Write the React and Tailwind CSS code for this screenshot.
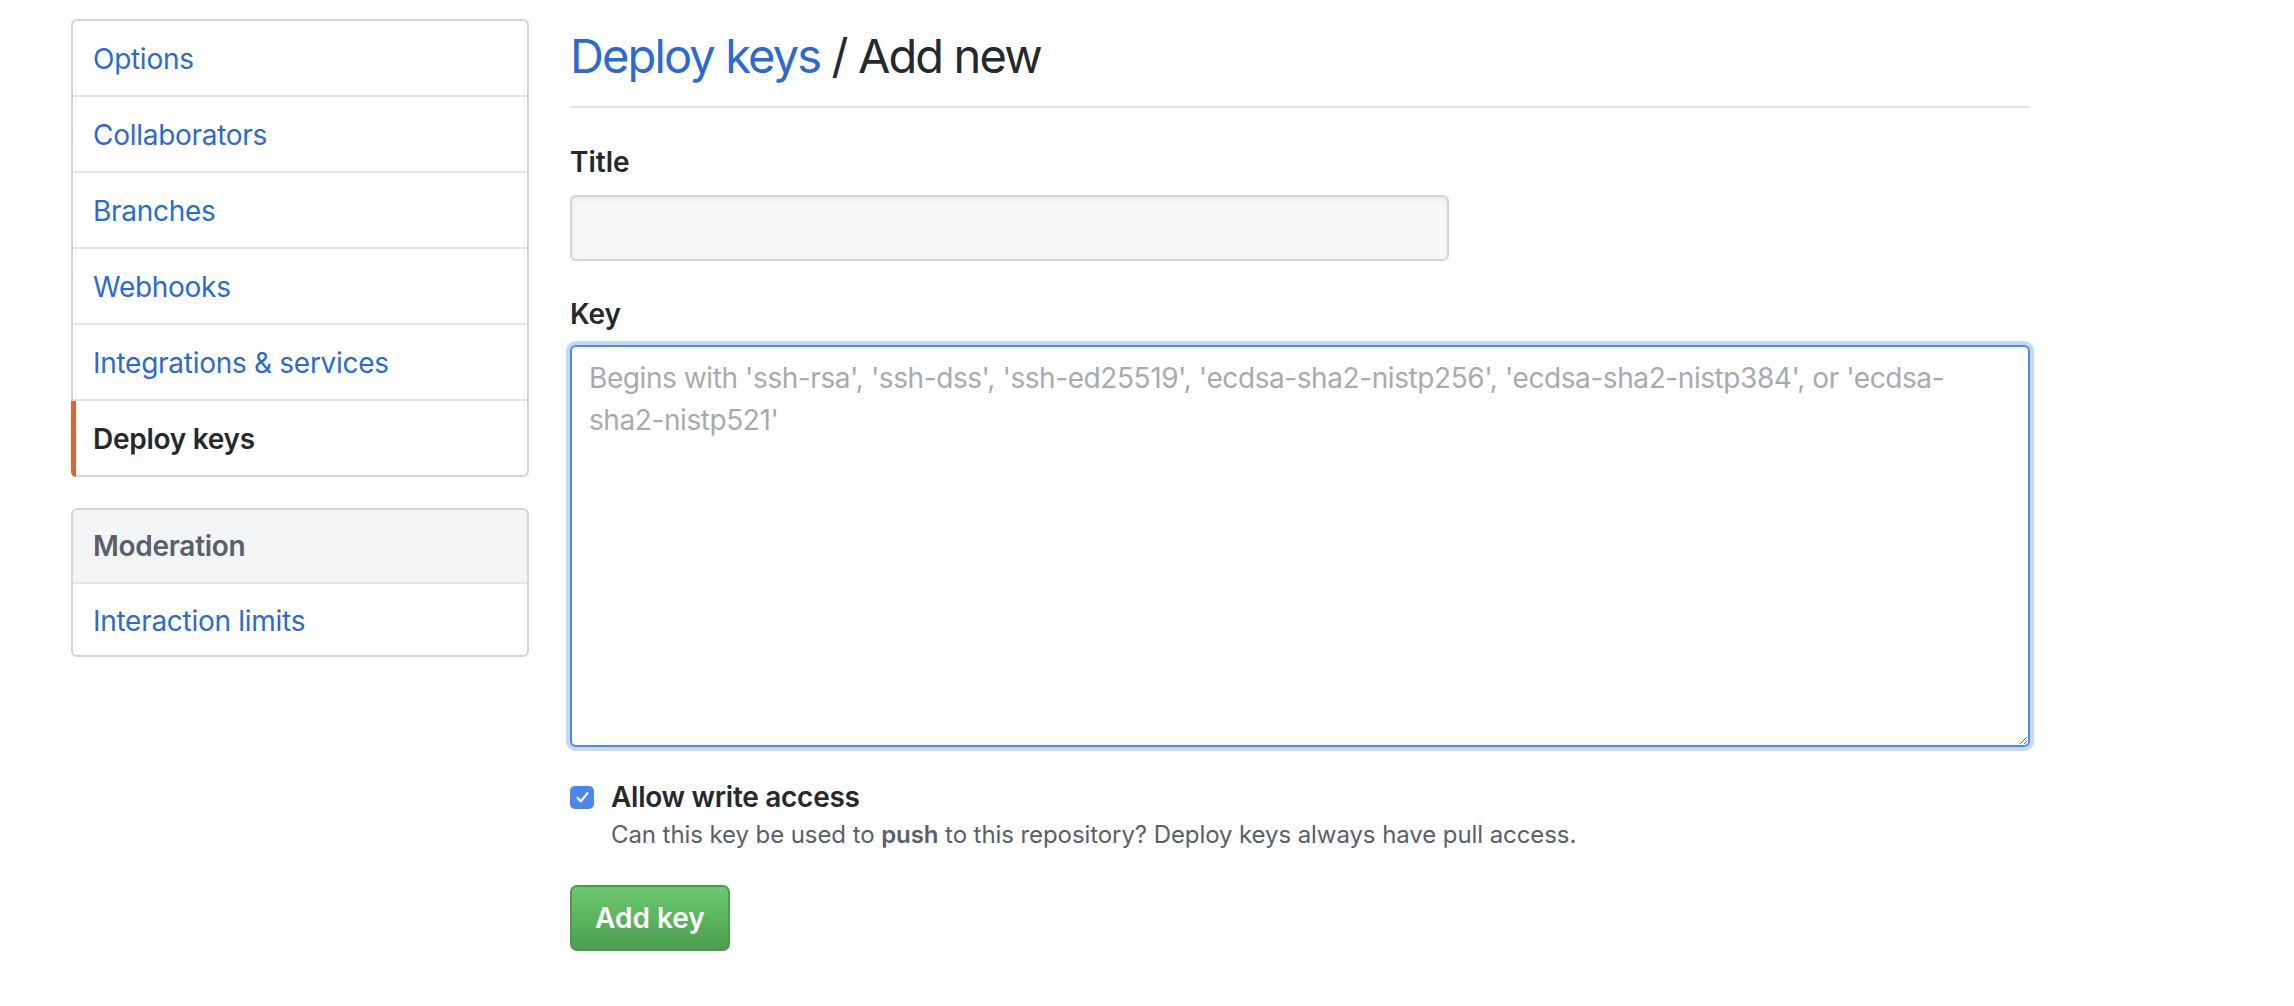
import React from "react";

const LINK = "text-[#2b6ad6]";

function MenuRow({ children, active, first }) {
  return (
    <a
      href="#"
      className={
        "relative block px-[20px] pt-[18px] pb-[16px] text-[28px] leading-[40px] tracking-[-0.01em] " +
        (first ? "" : "border-t-2 border-[#e1e4e8] ") +
        (active ? "font-semibold text-[#24292e]" : LINK)
      }
    >
      {active && (
        <span className="absolute left-[-2px] top-0 bottom-[-2px] w-[5px] bg-[#dc6530] rounded-bl-[6px]" />
      )}
      {children}
    </a>
  );
}

export default function App() {
  return (
    <div className="min-h-screen bg-white font-[Inter,'Noto_Sans',sans-serif] text-[#24292e] flex items-start pl-[71px]">
      <aside className="w-[458px] pt-[19px] flex flex-col gap-[31px] shrink-0">
        <nav className="border-2 border-[#d1d5da] rounded-[6px]">
          <MenuRow first>Options</MenuRow>
          <MenuRow>Collaborators</MenuRow>
          <MenuRow>Branches</MenuRow>
          <MenuRow>Webhooks</MenuRow>
          <MenuRow>Integrations &amp; services</MenuRow>
          <MenuRow active>Deploy keys</MenuRow>
        </nav>
        <nav className="border-2 border-[#d1d5da] rounded-[6px] overflow-hidden">
          <div className="bg-[#f3f4f6] px-[20px] pt-[16px] pb-[16px] text-[28px] leading-[40px] tracking-[-0.01em] font-semibold text-[#586069]">
            Moderation
          </div>
          <a
            href="#"
            className={"block border-t-2 border-[#e1e4e8] px-[20px] pt-[17px] pb-[14px] text-[28px] leading-[40px] tracking-[-0.01em] " + LINK}
          >
            Interaction limits
          </a>
        </nav>
      </aside>

      <main className="ml-[41px] w-[1460px] pt-[26px] shrink-0">
        <div className="pb-[20px] border-b-2 border-[#e1e4e8]">
          <h2 className="text-[47px] leading-[60px] font-normal tracking-[-0.04em]">
            <a href="#" className={LINK}>
              Deploy keys
            </a>{" "}
            / Add new
          </h2>
        </div>

        <form className="flex flex-col items-start">
          <label className="mt-[34px] text-[28px] leading-[40px] font-semibold">Title</label>
          <input
            type="text"
            className="mt-[13px] block w-[879px] h-[66px] rounded-[6px] border-2 border-[#d1d5da] bg-[#f7f8fa] shadow-[inset_0_2px_4px_rgba(27,31,35,0.075)] outline-none"
          />

          <label className="mt-[33px] text-[28px] leading-[40px] font-semibold">Key</label>
          <textarea
            className="mt-[11px] block w-[1460px] h-[402px] rounded-[6px] border-2 border-[#4a89f2] ring-4 ring-[#c6d8f7] pt-[10px] px-[17px] text-[28px] leading-[42px] tracking-[-0.015em] text-[#24292e] placeholder:text-[#a6abb2] outline-none bg-white"
            placeholder={
              "Begins with 'ssh-rsa', 'ssh-dss', 'ssh-ed25519', 'ecdsa-sha2-nistp256', 'ecdsa-sha2-nistp384', or 'ecdsa-\nsha2-nistp521'"
            }
          />

          <div className="mt-[30px] flex items-center gap-[17px]">
            <span className="w-[24px] h-[23px] rounded-[5px] bg-[#4a87ef] flex items-center justify-center">
              <svg viewBox="0 0 24 24" className="w-[17px] h-[17px]" fill="none" stroke="white" strokeWidth="3.2" strokeLinecap="round" strokeLinejoin="round">
                <path d="M5 12.5l4.5 5L19 6" />
              </svg>
            </span>
            <span className="text-[28px] leading-[40px] font-semibold tracking-[-0.01em]">Allow write access</span>
          </div>
          <p className="ml-[41px] text-[24px] leading-[36px] tracking-[-0.08px] text-[#586069]">
            Can this key be used to <strong className="font-semibold">push</strong> to this repository? Deploy keys always have pull access.
          </p>

          <button
            type="button"
            className="mt-[32px] h-[66px] px-[23px] rounded-[7px] border-2 border-[#4e9a50] bg-linear-to-b from-[#6dc96f] to-[#4c9f4f] text-white text-[28px] leading-[40px] font-semibold"
          >
            Add key
          </button>
        </form>
      </main>
    </div>
  );
}
